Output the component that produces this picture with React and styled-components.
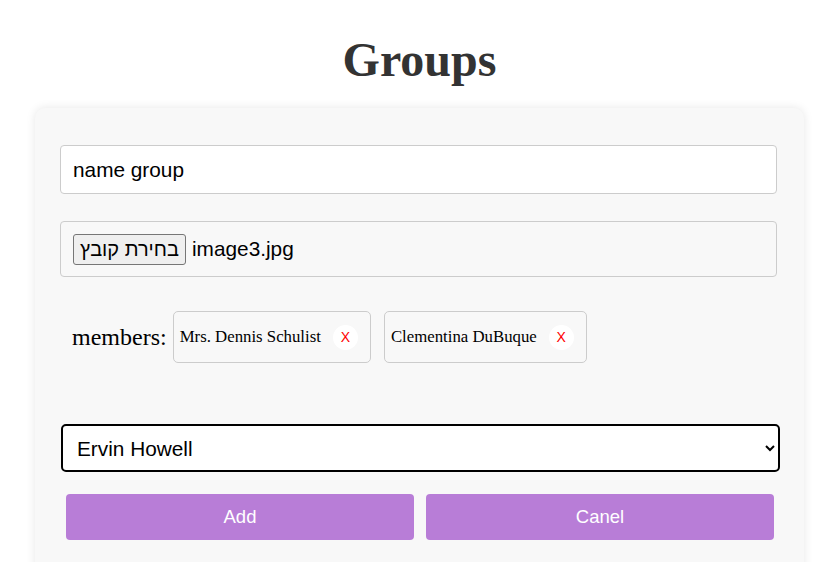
import React from "react";
import styled, { createGlobalStyle } from "styled-components";

const Global = createGlobalStyle`
  html, body { margin: 0; padding: 0; background: #ffffff; }
  body { font-family: "Liberation Serif", "Times New Roman", serif; }
  * { box-sizing: border-box; }
`;

const Page = styled.div`
  padding: 32px 15px 0 35px;
  height: 562px;
  overflow: hidden;
`;

const Title = styled.h1`
  margin: 0 0 20px;
  text-align: center;
  font-family: "Liberation Serif", "Times New Roman", serif;
  font-weight: bold;
  font-size: 48px;
  line-height: 56px;
  color: #333333;
`;

const Card = styled.div`
  background: #f8f8f8;
  border-radius: 10px;
  box-shadow: 0 0 10px rgba(0, 0, 0, 0.1);
  padding: 37px 27px 40px 25px;
  display: flex;
  flex-direction: column;
`;

const TextInput = styled.input`
  height: 49px;
  width: 100%;
  padding: 0 12px;
  border: 1px solid #cccccc;
  border-radius: 4px;
  background: #ffffff;
  font-family: "Liberation Sans", Arial, sans-serif;
  font-size: 20.8px;
  color: #000000;
  outline: none;
`;

const FileBox = styled.div`
  margin-top: 27px;
  height: 56px;
  display: flex;
  align-items: center;
  padding: 0 12px;
  border: 1px solid #cccccc;
  border-radius: 4px;
  background: #f8f8f8;
  font-family: "Liberation Sans", Arial, sans-serif;
  font-size: 20.8px;
  color: #000000;
`;

const FileButton = styled.button`
  height: 31px;
  width: 113px;
  padding: 0;
  margin: 0 6px 0 0;
  border: 1px solid #767676;
  border-radius: 3px;
  background: #efefef;
  font-family: "Liberation Sans", "DejaVu Sans", Arial, sans-serif;
  font-size: 20px;
  color: #000000;
  direction: rtl;
  white-space: nowrap;
`;

const MembersRow = styled.div`
  margin-top: 34px;
  display: flex;
  align-items: center;
  gap: 13px;
  padding-left: 12px;
`;

const MembersLabel = styled.span`
  font-family: "Liberation Serif", "Times New Roman", serif;
  font-size: 24px;
  color: #000000;
  margin-right: -7px;
`;

const Chip = styled.div`
  height: 52px;
  display: flex;
  align-items: center;
  padding: 0 12px 0 6px;
  border: 1px solid #cccccc;
  border-radius: 5px;
  background: #f8f8f8;
  font-family: "Liberation Serif", "Times New Roman", serif;
  font-size: 16.8px;
  color: #000000;
`;

const RemoveButton = styled.button`
  width: 25px;
  height: 25px;
  margin-left: 12px;
  padding: 0;
  border: none;
  border-radius: 50%;
  background: #ffffff;
  color: #ff0000;
  font-family: "Liberation Sans", Arial, sans-serif;
  font-size: 14px;
  display: flex;
  align-items: center;
  justify-content: center;
`;

const Select = styled.select`
  margin-top: 61px;
  width: calc(100% + 2px);
  margin-left: 1px;
  height: 48px;
  padding: 0 10px 0 10px;
  border: 2px solid #000000;
  border-radius: 5px;
  background: #ffffff;
  font-family: "Liberation Sans", Arial, sans-serif;
  font-size: 20.8px;
  color: #000000;
  outline: none;
`;

const ButtonRow = styled.div`
  margin-top: 22px;
  display: flex;
  gap: 12px;
  padding: 0 3px 0 6px;
`;

const ActionButton = styled.button`
  flex: 1;
  height: 46px;
  border: none;
  border-radius: 4px;
  background: #b87dd7;
  color: #ffffff;
  font-family: "Liberation Sans", Arial, sans-serif;
  font-size: 18.5px;
`;

const members = ["Mrs. Dennis Schulist", "Clementina DuBuque"];

export default function App() {
  return (
    <>
      <Global />
      <Page>
        <Title>Groups</Title>
        <Card>
          <TextInput defaultValue="name group" />
          <FileBox>
            <FileButton type="button">בחירת קובץ</FileButton>
            <span>image3.jpg</span>
          </FileBox>
          <MembersRow>
            <MembersLabel>members:</MembersLabel>
            {members.map((m) => (
              <Chip key={m}>
                <span>{m}</span>
                <RemoveButton type="button">X</RemoveButton>
              </Chip>
            ))}
          </MembersRow>
          <Select defaultValue="Ervin Howell">
            <option>Ervin Howell</option>
            <option>Leanne Graham</option>
            <option>Clementine Bauch</option>
          </Select>
          <ButtonRow>
            <ActionButton type="button">Add</ActionButton>
            <ActionButton type="button">Canel</ActionButton>
          </ButtonRow>
        </Card>
      </Page>
    </>
  );
}
